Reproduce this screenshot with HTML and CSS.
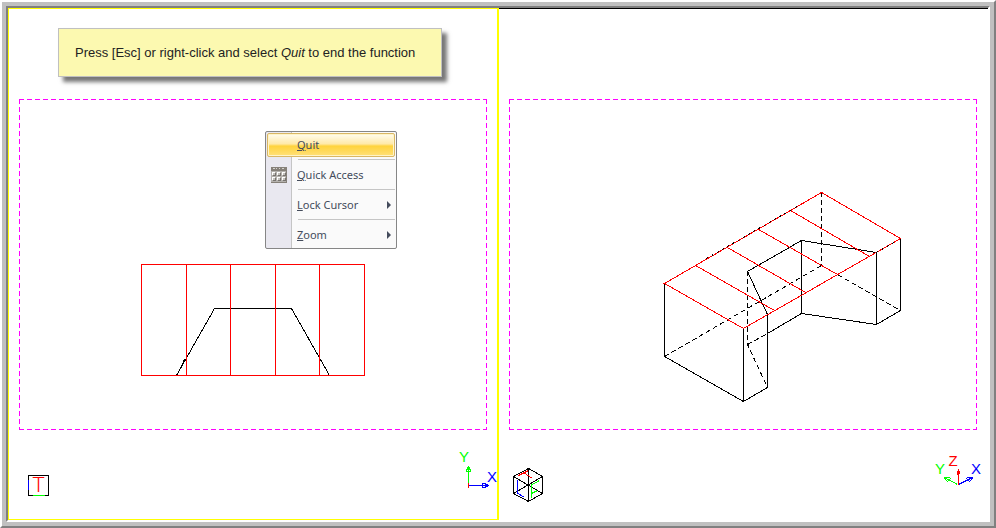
FILE: index.html
```html
<!DOCTYPE html>
<html lang="en">
<head>
<meta charset="utf-8">
<title>Viewports</title>
<link rel="stylesheet" href="styles.css">
</head>
<body>
<main class="window">
  <div class="views">
    <section class="view view-active" aria-label="Top view">
      <svg class="drawing" viewBox="9 9 488 510" shape-rendering="crispEdges">
        <path class="limits" d="M19 99.500H487"/>
        <path class="limits" d="M19 429.500H487"/>
        <path class="limits" d="M19.500 99V430"/>
        <path class="limits" d="M486.500 99V430"/>
        <path class="edge" d="M176.500 375.500L214.500 308.500H291.500L329.500 375.500M177.500 374.500L184.500 359.500"/>
        <path class="plate" d="M141.500 264.500H364.500V375.500H141.500ZM186.500 264V375M230.500 264V375M275.500 264V375M319.500 264V375"/>
        <path class="edge" d="M28.500 475.500H48.500V495.500H28.500Z"/>
        <path class="axis-x" d="M28.500 480V490"/>
        <path class="axis-y" d="M33 495.500H45"/>
        <text class="face-letter" x="38.500" y="492">T</text>
        <path class="axis-x" d="M469 485.500H489M482.500 483V488M482 483.500H486M482 487.500H486M485.500 484V487M486 484.500H488M486 486.500H488"/>
        <path class="axis-y" d="M468.500 485V466M466 471.500H471M466.500 472V469M470.500 472V469M466 469.500H471M467.500 469V467M469.500 469V467"/>
        <path class="plate" d="M468.500 483V488"/>
        <text class="axis-label label-y" x="464" y="462">Y</text>
        <text class="axis-label label-x" x="492" y="482">X</text>
      </svg>
      <p class="tip">Press [Esc] or right-click and select <em>Quit</em> to end the function</p>
      <div class="menu" role="menu">
        <button class="item item-hot" role="menuitem"><span class="label"><u>Q</u>uit</span></button>
        <button class="item" role="menuitem">
          <svg class="item-icon" viewBox="0 0 16 16" shape-rendering="crispEdges">
            <path fill="#b4b1ad" d="M0 0H16V16H0Z"/>
            <path fill="#858079" d="M0 0H16V4H0ZM15 4H16V16H0V15H15Z"/>
            <path fill="#d5d2ce" d="M2 1H4V2H2ZM5 1H6V2H5ZM8 1H9V2H8ZM11 1H13V2H11Z"/>
            <path fill="#77736f" d="M2 6H5V9H2ZM7 6H10V9H7ZM12 6H15V9H12ZM2 11H5V14H2ZM7 11H10V14H7ZM12 11H15V14H12Z"/>
            <path fill="#fff" d="M1 5H4V8H1ZM6 5H9V8H6ZM11 5H14V8H11ZM1 10H4V13H1ZM6 10H9V13H6ZM11 10H14V13H11Z"/>
            <path fill="#c5c2be" d="M2 6H4V8H2ZM7 6H9V8H7ZM12 6H14V8H12ZM2 11H4V13H2ZM7 11H9V13H7ZM12 11H14V13H12Z"/>
          </svg>
          <span class="label"><u>Q</u>uick Access</span>
        </button>
        <button class="item" role="menuitem" aria-haspopup="true"><span class="label"><u>L</u>ock Cursor</span><svg class="arrow" viewBox="0 0 4 8"><path d="M0 0L4 4L0 8Z"/></svg></button>
        <button class="item" role="menuitem" aria-haspopup="true"><span class="label"><u>Z</u>oom</span><svg class="arrow" viewBox="0 0 4 8"><path d="M0 0L4 4L0 8Z"/></svg></button>
      </div>
    </section>
    <section class="view view-right" aria-label="Isometric view">
      <svg class="drawing" viewBox="499 9 489 511" shape-rendering="crispEdges">
        <path class="limits" d="M509 99.500H977"/>
        <path class="limits" d="M509 429.500H977"/>
        <path class="limits" d="M509.500 99V430"/>
        <path class="limits" d="M976.500 99V430"/>
        <path class="hidden" d="M821.500 192V265.500"/>
        <path class="hidden" d="M664.500 356.500L821.500 265.500L900.500 310.500"/>
        <path class="hidden" d="M747.500 271V344.500L767.500 387.500M747.500 344.500L767.500 333.500"/>
        <path class="edge" d="M664.500 283.500V356.500L743.500 401.500V328.500M743.500 401.500L767.500 387.500V314.500L747.500 271.500L801.500 240.500L876.500 252.500V324.500L900.500 310.500V238.500M801.500 240.500V313.500L876.500 324.500M767.500 333.500L801.500 313.500"/>
        <path class="plate" d="M664.500 283.500L821.500 192.500L900.500 238.500L743.500 328.500ZM695.500 265.500L774.500 310.500M727.500 247.500L805.500 292.500M758.500 229.500L837.500 274.500M790.500 210.500L869.500 256.500"/>
        <path class="sparse" d="M706.500 258.500L800.500 204.500M876.500 252.500L895.500 241.500"/>
        <path class="edge" d="M528.500 468.500L542.500 476.500V493.500L528.500 501.500L513.500 493.500V476.500ZM528.500 468.500V501.500M513.500 476.500L542.500 493.500M542.500 476.500L513.500 493.500"/>
        <path class="plate" d="M518.500 475.500L528.500 470.500M523.500 472.500L532.500 478.500"/>
        <path class="axis-x" d="M517.500 480V493L524.500 497.500"/>
        <path class="axis-y" d="M531.500 498V485L539.500 480.500M531.500 493.500L537.500 490.500"/>
        <path class="axis-y" d="M957.500 484.500L944.500 477.500M944 477.500H950M944.500 478.500L947.500 481.500L950.500 478.500"/>
        <path class="axis-x" d="M958.500 484.500L972.500 477.500M967 477.500H973M972.500 478.500L969.500 481.500L966.500 478.500"/>
        <path class="plate" d="M958.500 485V469M957.500 471V475M959.500 471V474"/>
        <text class="axis-label label-y" x="940" y="474">Y</text>
        <text class="axis-label label-z" x="953" y="466">Z</text>
        <text class="axis-label label-x" x="976" y="474">X</text>
      </svg>
    </section>
  </div>
</main>
</body>
</html>
```
FILE: styles.css
```css
* { box-sizing: border-box; }
body { margin: 0; background: #fff; font-family: "Liberation Sans", Arial, sans-serif; }
.window {
  display: flex;
  min-height: 100vh;
  padding: 4px;
  background: #c0c0c0;
  border: 2px solid;
  border-color: #fff #808080 #808080 #fff;
}
.views {
  display: grid;
  grid-template-columns: 491fr 489fr;
  flex: 1;
  background: #fff;
  border: 2px solid;
  border-color: #808080 #fff #fff #808080;
}
.view { position: relative; min-width: 0; }
.view-active { border: 1px solid #ff0; border-right-width: 2px; }
.view-right { border-top: 1px solid #000; }
.drawing { display: block; width: 100%; overflow: visible; }
.drawing path { fill: none; stroke-width: 1px; }
.drawing .limits { stroke: #f0f; stroke-dasharray: 5 3; }
.drawing .edge { stroke: #000; }
.drawing .hidden { stroke: #000; stroke-dasharray: 5 3; }
.drawing .sparse { stroke: #000; stroke-dasharray: 2 4; }
.drawing .plate { stroke: #f00; }
.drawing .axis-x { stroke: #00f; }
.drawing .axis-y { stroke: #0f0; }
.axis-label { font-size: 15px; text-anchor: middle; }
.label-x { fill: #00f; }
.label-y { fill: #0f0; }
.label-z { fill: #f00; }
.face-letter { font-family: Roboto, sans-serif; font-size: 21px; font-weight: 300; text-anchor: middle; fill: #f00; }
.tip {
  position: absolute;
  top: 19px;
  left: 49px;
  min-width: 384px;
  margin: 0;
  padding: 16px;
  font-size: 13px;
  line-height: 15px;
  white-space: nowrap;
  color: #222;
  background: #fcf9b0;
  border: 1px solid #c0c0c0;
  box-shadow: 5px 5px 4px #777;
}
.menu {
  position: absolute;
  top: 122px;
  left: 256px;
  width: 132px;
  padding: 1px 1px 0;
  border: 1px solid #868686;
  border-radius: 2px;
  background: linear-gradient(90deg, #e9e8f0 25px, #c5c5c5 25px 26px, #fafafa 26px);
}
.item {
  display: flex;
  position: relative;
  align-items: center;
  width: 100%;
  height: 30px;
  padding: 4px 4px 0 30px;
  border: 0;
  background: none;
  font-family: "Noto Sans", sans-serif;
  font-size: 11px;
  line-height: 16px;
  text-align: left;
  color: #444c5c;
}
.item-hot {
  height: 24px;
  margin-bottom: 1px;
  padding: 0 4px 0 29px;
  border: 1px solid #d9b765;
  border-radius: 2px;
  background: linear-gradient(#fffdf0, #ffe9a8 45%, #ffd33c 55%, #ffe07a);
  box-shadow: inset 0 0 0 1px #fff4c8;
}
.item + .item::before { content: ""; position: absolute; top: 1px; right: 0; left: 31px; height: 1px; background: #c5c5c5; }
.label { flex: 1; }
.item-icon { position: absolute; left: 4px; width: 16px; height: 16px; }
.item-icon path { stroke: none; }
.arrow { width: 4px; height: 8px; fill: #444c5c; }
```
